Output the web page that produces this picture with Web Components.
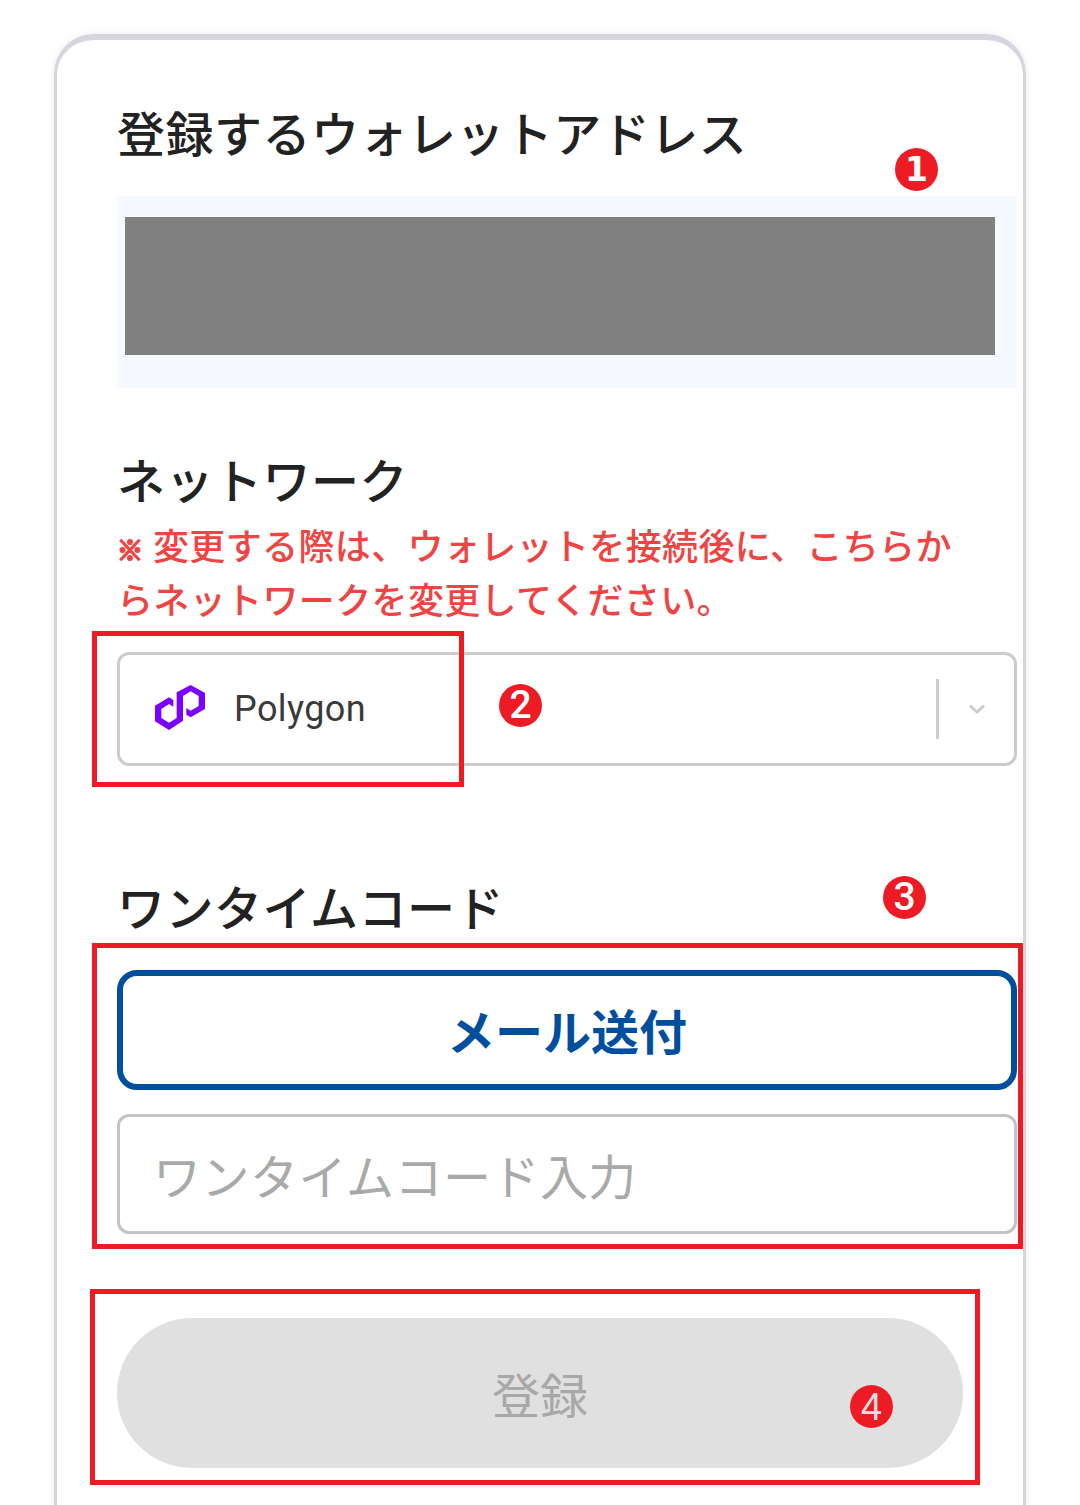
<!DOCTYPE html>
<html lang="ja">
<head>
<meta charset="utf-8">
<title>ウォレットアドレス登録</title>
<style>
  html, body { margin: 0; background: #fff; }
  body {
    position: relative;
    height: 1505px;
    overflow: hidden;
    font-family: "Noto Sans CJK JP", "Noto Sans", sans-serif;
  }
</style>
</head>
<body>
<wallet-card>
  <form-label>登録するウォレットアドレス</form-label>
  <address-box></address-box>

  <form-label style="margin-top:54px">ネットワーク</form-label>
  <notice-text>変更する際は、ウォレットを接続後に、こちらからネットワークを変更してください。</notice-text>
  <network-select>Polygon</network-select>

  <form-label style="margin-top:103px">ワンタイムコード</form-label>
  <outline-button>メール送付</outline-button>
  <code-input placeholder="ワンタイムコード入力"></code-input>
  <submit-button>登録</submit-button>
</wallet-card>

<!-- annotations drawn over the screenshot -->
<callout-box style="left:92px;top:631px;width:372px;height:156px"></callout-box>
<callout-box style="left:92px;top:943px;width:931px;height:306px"></callout-box>
<callout-box style="left:90px;top:1289px;width:890px;height:196px"></callout-box>
<step-badge style="left:895px;top:148px;--digit-font:'DejaVu Sans';--digit-size:33px;--digit-weight:700">1</step-badge>
<step-badge style="left:499px;top:684px">2</step-badge>
<step-badge style="left:883px;top:876px">3</step-badge>
<step-badge style="left:850px;top:1385px;--digit:#e0e0e0;--digit-font:'Liberation Sans';--digit-size:38px;--digit-weight:400">4</step-badge>

<script>
// Small helper, every element just stamps its css + markup into an open shadow root
class BaseEl extends HTMLElement {
  constructor() {
    super();
    this.attachShadow({ mode: 'open' });
    this.shadowRoot.innerHTML = `<style>${this.constructor.css}</style>${this.constructor.html}`;
  }
}

class WalletCard extends BaseEl {
  static css = `
    :host {
      display: block;
      box-sizing: border-box;
      margin: 34px 0 0 54px;
      width: 972px;
      height: 1471px;
      padding: 55px 6px 0 60px;
      background: #fff;
      border: 3px solid #d5d5de;
      border-top-width: 6px;
      border-bottom: 0;
      border-radius: 40px 40px 0 0;
      box-shadow: 0 0 6px rgba(213, 213, 222, .5);
    }
  `;
  static html = `<slot></slot>`;
}

class FormLabel extends BaseEl {
  static css = `
    :host {
      display: block;
      font-size: 48px;
      font-weight: 500;
      line-height: 72px;
      letter-spacing: .48px;
      color: #222;
      white-space: nowrap;
    }
  `;
  static html = `<slot></slot>`;
}

class AddressBox extends BaseEl {
  static css = `
    :host {
      display: block;
      box-sizing: border-box;
      margin-top: 29px;
      height: 192px;
      padding: 21px 22px 33px 8px;
      background: #f6f9ff;
    }
    .mask { height: 138px; background: #808080; }
  `;
  static html = `<div class="mask"></div>`;
}

class NoticeText extends BaseEl {
  static css = `
    :host {
      display: block;
      margin-top: 3px;
      padding-right: 50px;
      font-size: 36px;
      font-weight: 500;
      line-height: 54px;
      letter-spacing: .36px;
      color: #ef4444;
    }
    .mark {
      display: inline-block;
      width: 36px;
      font-size: 26px;
      font-weight: 700;
      line-height: 1;
      -webkit-text-stroke: 2px #ef4444;
    }
  `;
  static html = `<span class="mark">※</span><slot></slot>`;
}

class NetworkSelect extends BaseEl {
  static css = `
    :host {
      display: flex;
      align-items: center;
      box-sizing: border-box;
      margin-top: 27px;
      height: 114px;
      padding-left: 35px;
      background: #fff;
      border: 3px solid #ccc;
      border-radius: 12px;
      font-family: Roboto, "Noto Sans", sans-serif;
      font-size: 36px;
      color: #3a3a3a;
    }
    svg.logo { width: 50px; height: 45px; flex: none; fill: #7b00ff; margin-bottom: 4px; }
    .name { margin-left: 29px; flex: 1; letter-spacing: .4px; }
    .sep { width: 3px; height: 60px; background: #ccc; }
    .arrow { display: flex; justify-content: center; width: 75px; }
    svg.chevron { width: 16px; height: 10px; fill: none; stroke: #ccc; stroke-width: 3; }
  `;
  static html = `
    <svg class="logo" viewBox="195 163 150 135" aria-hidden="true">
      <path d="M302 163L345 187V235L302 260L289 252V232L302 240L326 226V196L302 182L279 196V270L237 298L195 272V225L237 200L250 208V228L237 220L214 235V262L237 276L260 262V185Z"/>
    </svg>
    <span class="name"><slot></slot></span>
    <span class="sep"></span>
    <span class="arrow"><svg class="chevron" viewBox="0 0 16 10"><path d="M1 1.5L8 8L15 1.5"/></svg></span>
  `;
}

class OutlineButton extends BaseEl {
  static css = `
    :host {
      display: flex;
      align-items: center;
      justify-content: center;
      box-sizing: border-box;
      margin-top: 29px;
      height: 120px;
      padding-bottom: 3px;
      background: #fff;
      border: 6px solid #004e9e;
      border-radius: 20px;
      font-size: 48px;
      font-weight: 700;
      color: #004e9e;
    }
  `;
  static html = `<slot></slot>`;
}

class CodeInput extends BaseEl {
  static css = `
    :host { display: block; margin-top: 24px; }
    input {
      display: block;
      box-sizing: border-box;
      width: 100%;
      height: 120px;
      padding: 0 33px;
      background: #fff;
      border: 3px solid #c4c4c4;
      border-radius: 12px;
      outline: none;
      font: inherit;
      font-size: 48px;
      letter-spacing: .48px;
      color: #333;
    }
    input::placeholder { color: #a9a9a9; opacity: 1; }
  `;
  static html = `<input type="text">`;
  connectedCallback() {
    this.shadowRoot.querySelector('input').placeholder = this.getAttribute('placeholder') || '';
  }
}

class SubmitButton extends BaseEl {
  static css = `
    :host {
      display: flex;
      align-items: center;
      justify-content: center;
      box-sizing: border-box;
      margin-top: 84px;
      width: 846px;
      height: 150px;
      padding-bottom: 1px;
      background: #e0e0e0;
      border-radius: 75px;
      font-size: 48px;
      color: #a8a8a8;
    }
  `;
  static html = `<slot></slot>`;
}

class CalloutBox extends BaseEl {
  static css = `
    :host {
      position: absolute;
      box-sizing: border-box;
      border: 5px solid #ed1c24;
      pointer-events: none;
    }
  `;
  static html = ``;
}

class StepBadge extends BaseEl {
  static css = `
    :host {
      position: absolute;
      display: flex;
      align-items: center;
      justify-content: center;
      width: 43px;
      height: 43px;
      border-radius: 50%;
      background: #ed1c24;
      font-family: var(--digit-font, Roboto), sans-serif;
      font-size: var(--digit-size, 39px);
      font-weight: var(--digit-weight, 500);
      line-height: 1;
      color: var(--digit, #fff);
    }
  `;
  static html = `<slot></slot>`;
}

customElements.define('wallet-card', WalletCard);
customElements.define('form-label', FormLabel);
customElements.define('address-box', AddressBox);
customElements.define('notice-text', NoticeText);
customElements.define('network-select', NetworkSelect);
customElements.define('outline-button', OutlineButton);
customElements.define('code-input', CodeInput);
customElements.define('submit-button', SubmitButton);
customElements.define('callout-box', CalloutBox);
customElements.define('step-badge', StepBadge);
</script>
</body>
</html>
